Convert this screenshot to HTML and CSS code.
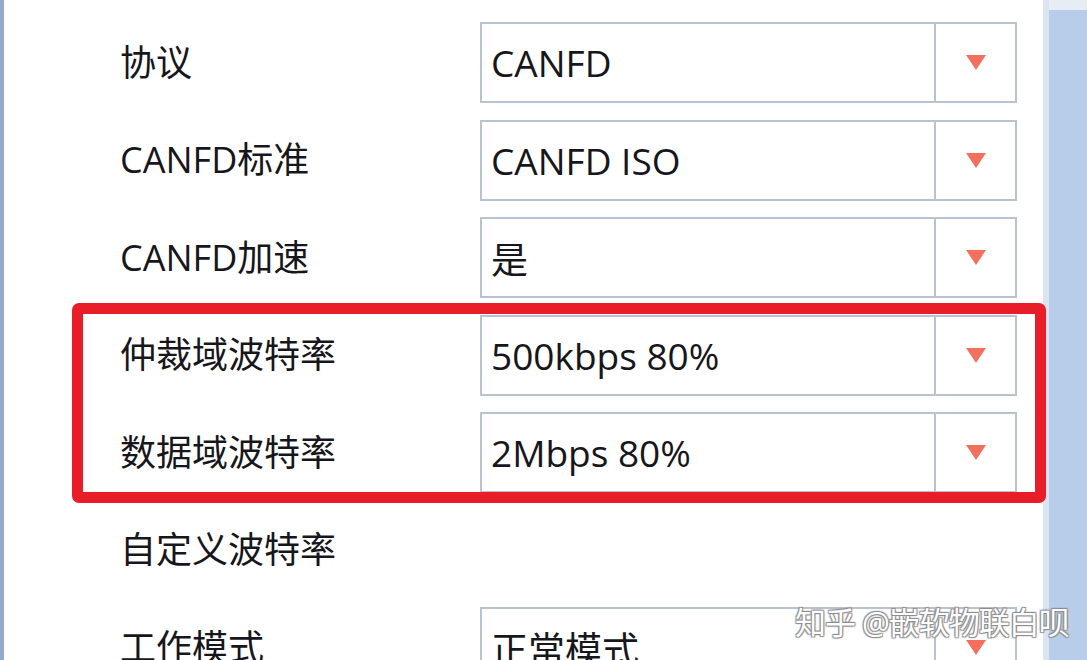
FILE: index.html
```html
<!DOCTYPE html>
<html lang="zh-CN">
<head>
    <meta charset="UTF-8">
    <meta name="viewport" content="width=device-width, initial-scale=1.0">
    <title>CANFD 设置</title>
    <link rel="stylesheet" href="styles.css">
</head>
<body>
    <div class="window">
        <div class="edge"></div>

        <div class="form">
            <div class="row">
                <span class="label">协议</span>
                <div class="select">
                    <span class="value">CANFD</span>
                    <span class="arrow"><svg width="20" height="15" viewBox="0 0 20 15"><polygon points="0,0 20,0 10,15" /></svg></span>
                </div>
            </div>
            <div class="row">
                <span class="label">CANFD标准</span>
                <div class="select">
                    <span class="value">CANFD ISO</span>
                    <span class="arrow"><svg width="20" height="15" viewBox="0 0 20 15"><polygon points="0,0 20,0 10,15" /></svg></span>
                </div>
            </div>
            <div class="row">
                <span class="label">CANFD加速</span>
                <div class="select">
                    <span class="value">是</span>
                    <span class="arrow"><svg width="20" height="15" viewBox="0 0 20 15"><polygon points="0,0 20,0 10,15" /></svg></span>
                </div>
            </div>

            <!-- highlighted rows -->
            <div class="group">
                <div class="row">
                    <span class="label">仲裁域波特率</span>
                    <div class="select">
                        <span class="value">500kbps 80%</span>
                        <span class="arrow"><svg width="20" height="15" viewBox="0 0 20 15"><polygon points="0,0 20,0 10,15" /></svg></span>
                    </div>
                </div>
                <div class="row">
                    <span class="label">数据域波特率</span>
                    <div class="select">
                        <span class="value">2Mbps 80%</span>
                        <span class="arrow"><svg width="20" height="15" viewBox="0 0 20 15"><polygon points="0,0 20,0 10,15" /></svg></span>
                    </div>
                </div>
            </div>

            <div class="row">
                <span class="label">自定义波特率</span>
            </div>
            <div class="row">
                <span class="label">工作模式</span>
                <div class="select">
                    <span class="value">正常模式</span>
                    <span class="arrow"><svg width="20" height="15" viewBox="0 0 20 15"><polygon points="0,0 20,0 10,15" /></svg></span>
                </div>
            </div>
        </div>

        <div class="side">
            <div class="side-cap"></div>
        </div>

        <div class="watermark">知乎 @嵌软物联白呗</div>
    </div>
</body>
</html>
```

FILE: styles.css
```css
body {
    margin: 0;
    padding: 0;
    background-color: #ffffff;
    font-family: "Open Sans", "Noto Sans CJK SC", sans-serif;
    color: #16161c;
}
.window {
    position: relative;
    display: flex;
    width: 1087px;
    height: 660px;
    overflow: hidden;
}
.edge {
    width: 4px;
    background-color: #94aacb;
}
.form {
    flex: 1;
    display: flex;
    flex-direction: column;
    gap: 16.5px;
    padding: 22px 0 0 116px;
}
.group {
    position: relative;
    display: flex;
    flex-direction: column;
    gap: 16.5px;
}
.group::after {
    content: "";
    position: absolute;
    top: -12px;
    bottom: -10px;
    left: -48px;
    right: -3px;
    border: 11px solid #e81d27;
    border-radius: 7px;
}
.row {
    display: grid;
    grid-template-columns: 360px 537px;
    align-items: center;
    height: 81px;
    flex-shrink: 0;
}
.label {
    font-size: 36px;
    line-height: 1;
}
.select {
    display: flex;
    height: 81px;
    box-sizing: border-box;
    border: 2px solid #b8c3d2;
    background-color: #fff;
}
.value {
    flex: 1;
    display: flex;
    align-items: center;
    padding-left: 9px;
    font-size: 37px;
}
.arrow {
    width: 79px;
    display: flex;
    align-items: center;
    justify-content: center;
    border-left: 2px solid #b8c3d2;
}
.arrow svg {
    fill: #f4705e;
}
.side {
    width: 44px;
    box-sizing: border-box;
    border-left: 6px solid #dbe5f1;
    background-color: #b8cdea;
}
.side-cap {
    height: 10px;
    background-color: #e6edf5;
}
.watermark {
    position: absolute;
    left: 795px;
    top: 598px;
    font-size: 31px;
    letter-spacing: -1px;
    color: #ffffff;
    text-shadow: 1px 1px 1px #8d8d8d, -1px -1px 1px #8d8d8d, 1px -1px 1px #8d8d8d, -1px 1px 1px #8d8d8d;
}
```
